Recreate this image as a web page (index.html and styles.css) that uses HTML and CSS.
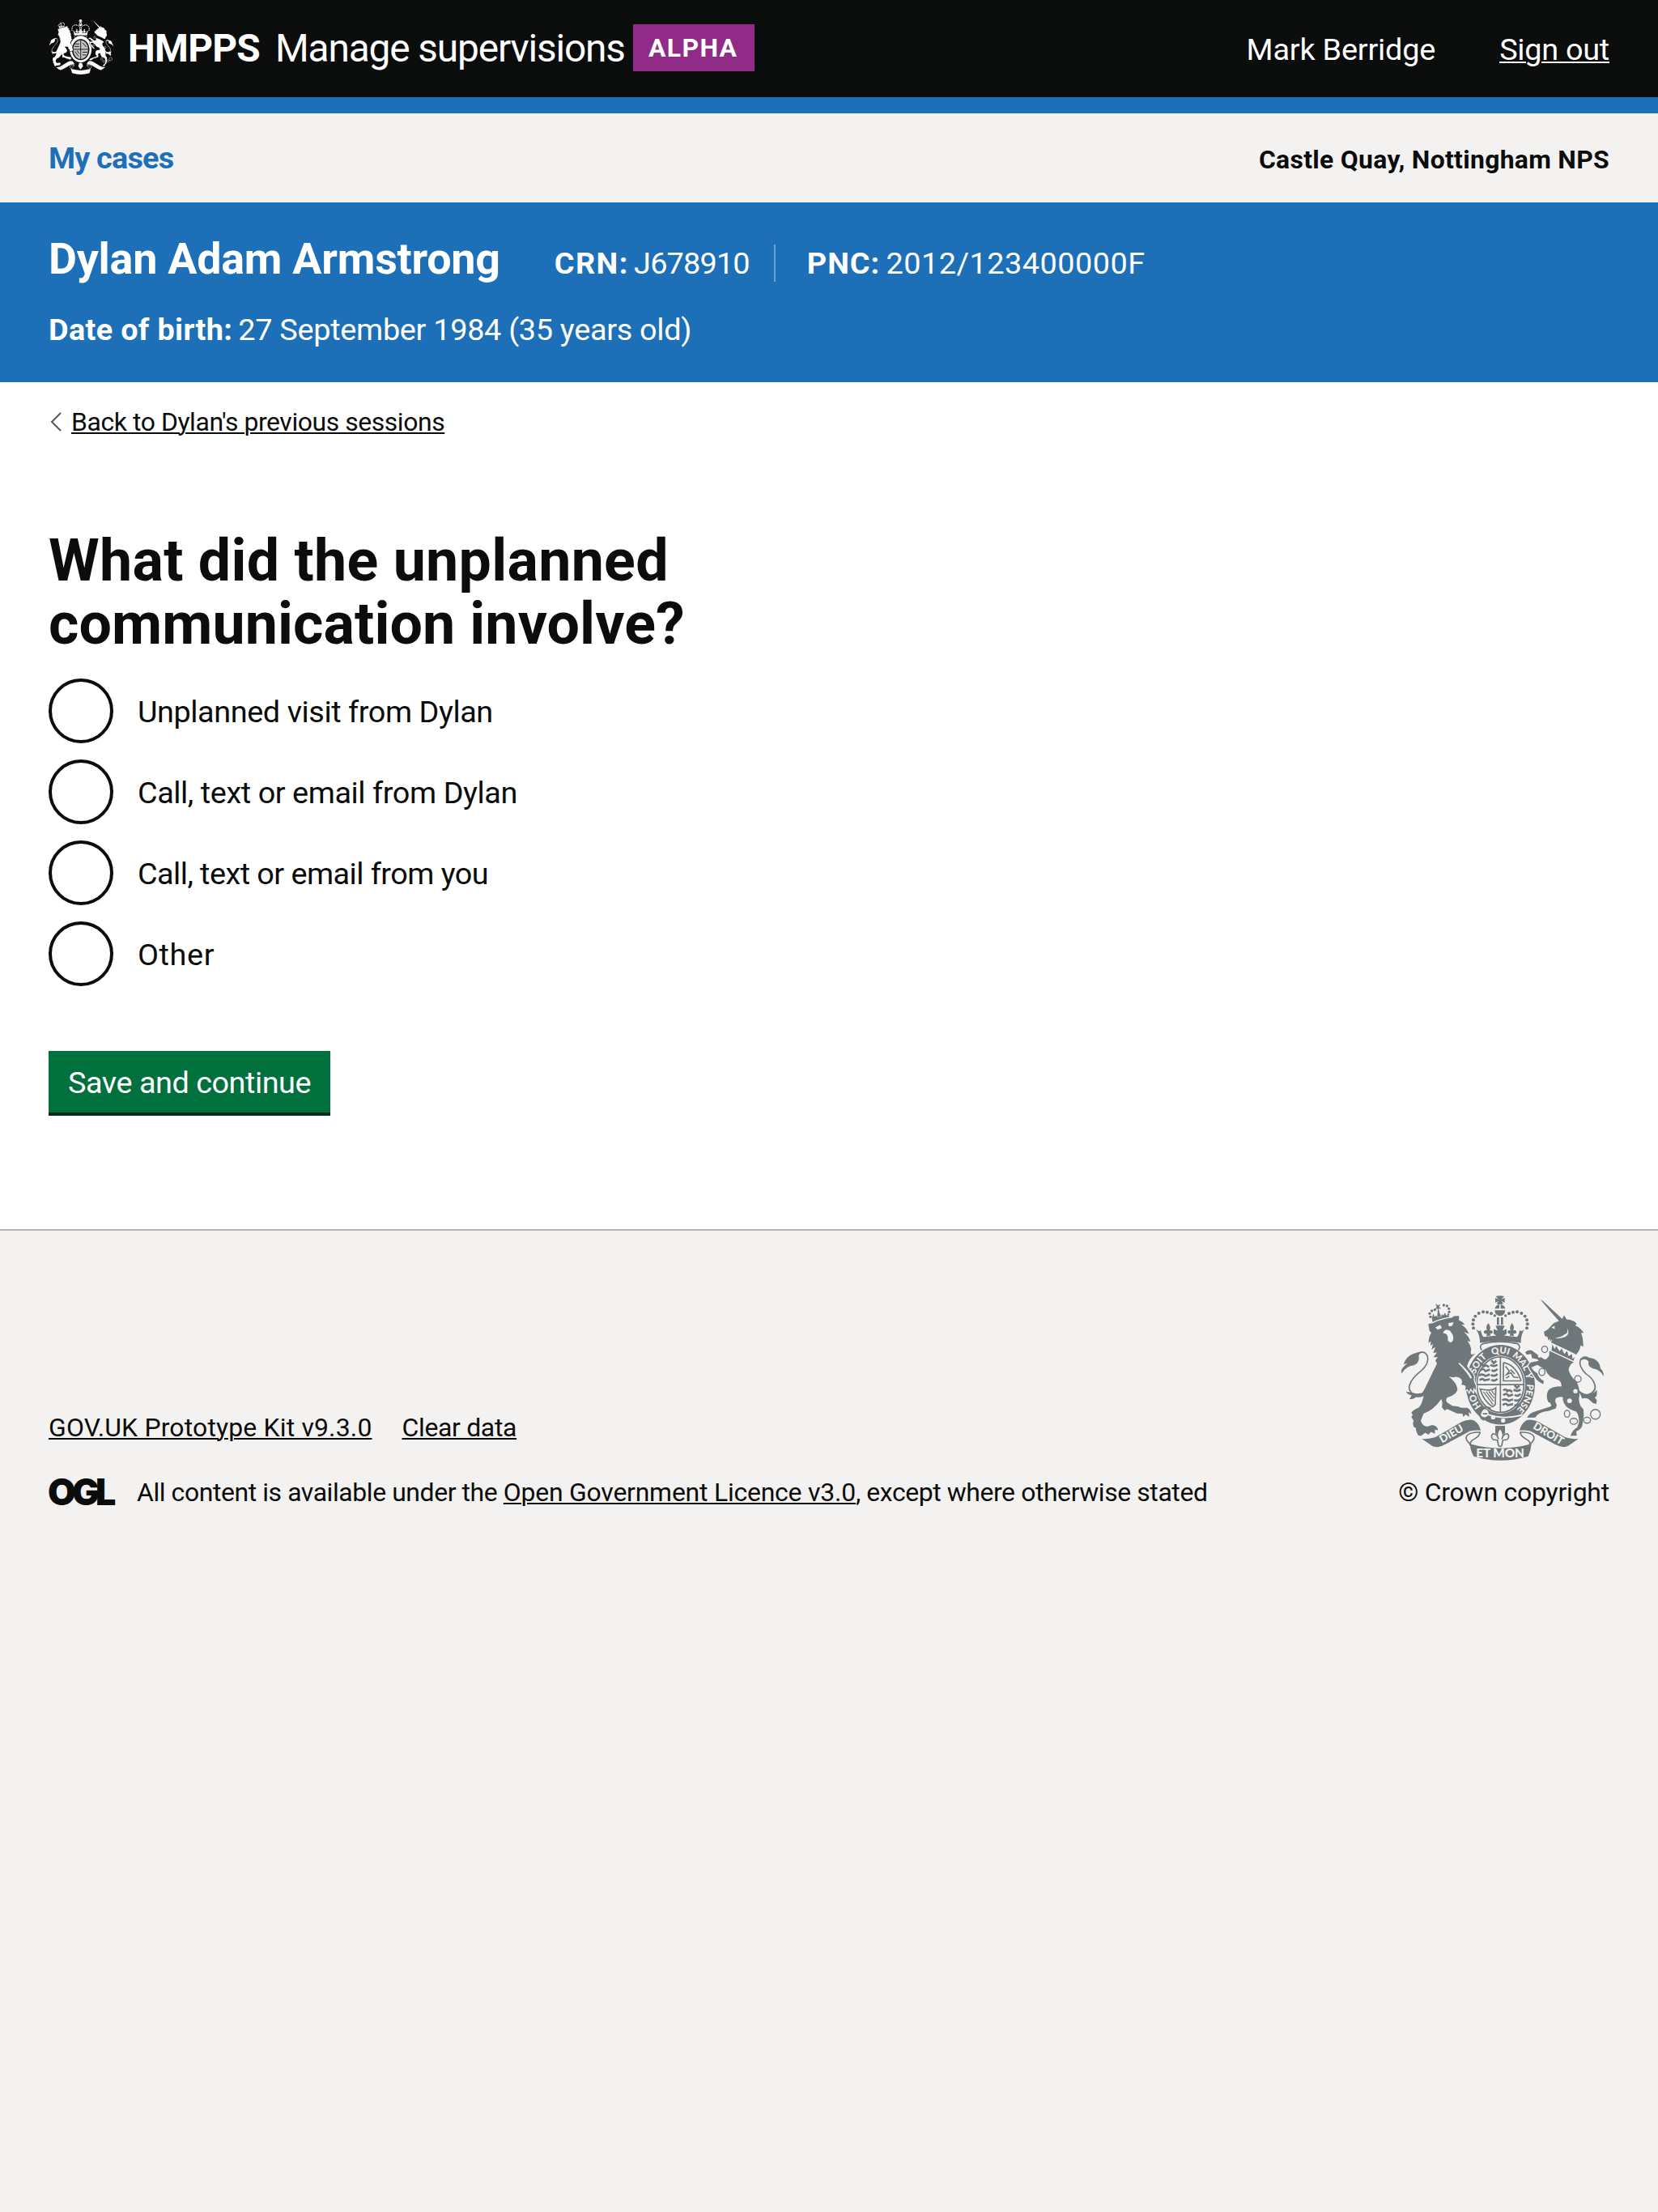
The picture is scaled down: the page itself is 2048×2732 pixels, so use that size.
FILE: index.html
```
<!DOCTYPE html>
<html lang="en">
<head>
<meta charset="utf-8">
<title>What did the unplanned communication involve? - Manage supervisions</title>
<link rel="stylesheet" href="styles.css">
</head>
<body>
<svg class="defs" width="0" height="0" aria-hidden="true">
  <defs>
    <g id="dots">
      <circle cx="363" cy="420" r="6"/><circle cx="361" cy="405" r="6"/><circle cx="363" cy="390" r="6"/><circle cx="370" cy="376" r="6"/><circle cx="383" cy="365" r="6"/><circle cx="399" cy="360" r="6"/><circle cx="414" cy="361" r="6"/><circle cx="429" cy="366" r="6"/><circle cx="442" cy="374" r="5"/>
    </g>
    <g id="fleur">
      <path d="M418 401 Q406 418 414 428 Q404 426 401 434 Q403 444 413 440 L411 450 L427 448 L424 440 Q434 443 435 433 Q431 426 423 429 Q430 418 418 401Z"/>
    </g>
    <g id="beasts">
      <!-- lion -->
      <g><circle cx="204" cy="378" r="5"/><circle cx="201" cy="366" r="5"/><circle cx="209" cy="356" r="5"/><circle cx="220" cy="352" r="5"/><circle cx="253" cy="335" r="5"/><circle cx="265" cy="338" r="5"/><circle cx="272" cy="348" r="5"/><circle cx="273" cy="360" r="5"/><circle cx="270" cy="370" r="4"/></g>
      <path d="M222 330 L232 336 L240 331 L236 342 L244 348 L234 348 L237 362 L243 376 L229 380 L231 348 L221 350 L227 341Z"/>
      <path d="M209 384 L214 366 L219 378 L226 374 L230 380 L244 377 L246 368 L252 373 L257 363 L262 372 L270 374 L274 380 Q240 384 212 398Z"/>
      <path class="edge" d="M212 402 Q245 386 283 382 L291 376 L310 375 L309 391 Q322 396 331 407 L318 407 Q338 418 346 441 L328 435 Q346 450 352 470 L341 468 Q352 482 355 498 Q352 508 354 517 Q362 519 371 514 Q346 535 339 562 L352 579 Q362 588 366 602 Q360 612 372 634 L371 652 L364 640 L362 656 L352 644 L347 657 L340 646 L332 652 Q336 640 333 634 L318 629 Q324 620 318 610 Q306 596 288 603 L272 600 Q300 622 304 645 Q304 665 270 676 Q258 680 264 695 L286 709 Q304 708 318 716 L340 716 Q354 722 355 740 L346 731 L347 750 L334 741 L326 750 L322 738 L302 737 L276 725 Q260 716 258 728 L246 714 Q250 696 244 684 Q215 725 178 738 L168 764 Q174 784 192 786 L210 780 Q230 782 232 800 L221 796 L220 812 L206 805 L196 816 L185 808 L168 820 L158 818 Q148 800 150 790 L142 787 Q136 770 142 765 L133 750 L138 742 L133 734 Q142 722 160 716 Q170 706 174 690 L180 668 L173 662 Q186 640 195 620 Q216 575 228 552 L222 540 L231 528 L215 528 L228 510 L214 512 L222 490 L208 500 L213 478 L204 486 L205 468 L197 476 Q196 455 207 438 L200 430 L196 404Z"/>
      <path class="line" d="M184 660 Q165 672 142 667 Q118 650 127 630 Q135 605 170 578 Q200 550 193 525 Q184 502 158 514"/>
      <path d="M192 508 Q168 504 160 522 Q166 548 142 558 Q112 562 97 588 Q93 575 103 565 L118 550 L104 555 Q114 524 140 515 Q160 508 180 506Z"/>
      <path d="M184 656 Q160 668 140 660 L113 656 Q120 668 134 670 L126 684 Q142 684 150 676 Q165 680 182 671Z"/>
      <!-- unicorn -->
      <path d="M612 315 Q618 316 622 321 L692 386 L699 372 L708 388 Q735 390 746 404 L740 410 Q762 420 772 438 L762 438 Q770 456 770 490 L760 484 Q758 504 744 518 L708 500 L650 474 L656 462 L646 470 L649 458 L641 466 L637 452 L628 450 L624 434 L640 424 L660 402 L680 394 Q640 350 612 315Z"/>
      <path class="edge" d="M644 504 L690 522 L736 546 Q716 556 716 576 Q722 600 746 620 Q758 646 756 670 Q750 690 762 712 L771 722 Q774 745 768 770 L766 785 Q756 800 744 803 L746 819 L723 820 Q728 800 748 788 L754 770 Q756 745 744 730 Q700 720 694 684 Q700 670 672 678 Q660 686 672 706 L668 718 L640 728 Q616 730 600 742 L592 752 L562 753 Q568 736 590 730 L650 711 Q655 700 640 694 Q630 672 640 652 Q650 636 690 636 Q688 615 676 612 Q640 604 630 575 L600 557 L578 566 Q584 580 600 588 Q604 606 624 616 L622 628 Q600 618 592 604 L582 588 Q570 572 566 560 L575 548 L605 542 L600 536 L580 532 L577 516 L560 518 L555 510 Q565 498 580 503 L596 515 L616 530 Q628 540 634 534 Q648 524 644 504Z"/>
      <path class="line" d="M748 650 Q768 672 790 668 Q822 652 812 628 Q805 605 780 590 Q752 560 759 540 Q768 522 788 530"/>
      <path d="M758 534 Q780 524 810 534 Q832 545 834 570 Q846 580 846 599 Q832 574 806 570 Q784 562 790 545 Q780 530 762 540Z"/>
      <path d="M752 648 Q776 672 794 662 Q814 662 820 648 Q824 672 812 680 Q824 682 818 702 Q804 700 796 690 Q784 676 766 682Z"/>
      <g class="ring"><ellipse cx="627" cy="499" rx="11" ry="12"/><ellipse cx="617" cy="583" rx="11" ry="13"/><ellipse cx="750" cy="609" rx="12" ry="12"/><ellipse cx="710" cy="738" rx="10" ry="13"/><ellipse cx="735" cy="766" rx="14" ry="11"/><ellipse cx="784" cy="762" rx="13" ry="11"/><circle cx="815" cy="740" r="18"/></g>
      <!-- crown -->
      <path d="M446 302 Q461 298 477 302 L467 313 L479 308 L479 326 L467 319 L474 330 Q461 334 449 330 L456 319 L444 326 L444 308 L456 313Z"/>
      <path d="M442 348 Q446 334 459 332 L459 348Z M464 332 Q478 335 481 348 L464 348Z M442 354 L481 354 Q480 374 461 375 Q443 374 442 354Z"/>
      <path d="M450 380 L458 380 L458 408 L450 408Z M465 380 L473 380 L473 408 L465 408Z"/>
      <use href="#dots"/><use href="#dots" transform="matrix(-1 0 0 1 924 0)"/>
      <use href="#fleur"/><use href="#fleur" transform="matrix(-1 0 0 1 924 0)"/>
      <path d="M372 424 Q384 436 390 428 Q394 446 400 453 L448 448 L438 442 L438 424 L453 430 L445 412 Q462 408 479 412 L471 430 L486 424 L486 442 L476 448 L524 453 Q532 446 534 428 Q542 436 552 424 Q538 446 539 475 Q462 464 387 475 Q388 446 372 424Z"/>
      <path class="line" d="M398 478 Q462 464 526 478 Q540 486 530 502 M398 478 Q382 486 394 502"/>
    </g>
    <g id="scroll">
      <path d="M172 831 Q200 833 222 825 L320 768 Q346 756 366 763 Q384 775 390 800 Q372 798 350 802 L258 852 Q232 866 212 859Z"/>
      <path class="line" d="M388 806 Q338 806 336 828 Q338 842 354 852 M388 806 Q386 822 366 832 Q350 840 350 856"/>
    </g>
    <g id="pards">
      <path class="fine" d="M388 560 Q396 550 402 562 Q412 554 420 566 M388 578 Q398 566 408 580 L424 574 M384 596 Q396 588 408 598 L424 592 M386 614 Q396 604 404 614 L424 610 M430 540 L438 550 L448 542 M426 556 Q438 566 452 556 M430 576 Q440 584 452 572 M428 594 Q442 602 452 590 M430 612 Q440 620 452 608"/>
    </g>
    <symbol id="arms" viewBox="96 299 750 613" preserveAspectRatio="none">
      <!-- garter and shield -->
      <ellipse cx="463" cy="630" rx="128" ry="148"/>
      <g class="paper">
        <ellipse cx="463" cy="630" rx="92" ry="108"/>
        <path d="M398 732 Q470 762 548 738 L540 747 Q470 764 412 742Z"/>
        <circle cx="436" cy="751" r="8"/><circle cx="473" cy="763" r="8"/><circle cx="404" cy="736" r="15"/>
      </g>
      <path class="line" d="M428 718 Q404 704 392 730 Q380 752 402 762 M398 738 L414 738"/>
      <path d="M486 744 L506 724 Q524 728 522 740Z"/>
      <ellipse class="line" cx="463" cy="630" rx="87" ry="103"/>
      <path class="line" d="M463 527 L463 733 M376 630 L550 630"/>
      <use href="#pards"/><use href="#pards" transform="translate(86 92)"/>
      <g class="line">
        <path d="M474 548 L474 616 L540 616 M474 548 Q520 556 540 616"/>
        <path d="M482 562 L496 580 L486 592 L502 586 L512 602 L530 604 M500 574 L516 590 M484 606 L496 598"/>
        <path d="M388 646 Q430 656 446 642 L444 704 L434 712 Q400 690 388 646Z"/>
      </g>
      <path class="harp" d="M400 656 L436 704 M410 656 L438 692 M420 655 L440 680 M430 652 L442 668"/>
      <g class="motto">
        <path id="garter" fill="none" d="M463 746 A98 116 0 0 1 463 514 A98 116 0 0 1 463 746"/>
        <text><textPath href="#garter" startOffset="16%">HO</textPath></text>
        <text><textPath href="#garter" startOffset="36.5%">SOIT</textPath></text>
        <text><textPath href="#garter" startOffset="50%">QUI</textPath></text>
        <text><textPath href="#garter" startOffset="62%">MAL</textPath></text>
        <text><textPath href="#garter" startOffset="70.5%">Y</textPath></text>
        <text><textPath href="#garter" startOffset="82.5%">PENSE</textPath></text>
      </g>
      <use href="#beasts"/>
      <g class="paper">
        <path d="M222 418 L240 408 L246 420 L230 426Z M270 402 L290 398 L284 412 L272 414Z"/>
        <path d="M250 438 Q256 426 264 426 L276 430 L286 444 Q292 462 283 472 Q272 476 268 464 Q270 450 262 442Z"/>
        <path d="M700 444 Q716 440 710 420 Q722 442 704 452 Q680 462 664 456 Q686 456 700 444Z M652 418 L664 412 L664 424Z"/>
        <path d="M652 474 L748 522 L736 548 L646 505Z"/>
        <circle cx="741" cy="654" r="8"/><circle cx="719" cy="690" r="9"/><circle cx="608" cy="524" r="6"/>
        <path d="M310 548 Q346 580 358 604 L352 608 Q340 584 308 552Z"/>
      </g>
      <path d="M656 480 L664 498 L670 486 L682 506 L690 496 L700 516 L710 505 L716 524 L728 516 L730 534 L738 528 L734 542 L652 503Z"/>
      <use href="#scroll"/><use href="#scroll" transform="matrix(-1 0 0 1 924 0)"/>
      <path d="M350 850 Q462 882 578 850 Q576 876 566 896 Q462 926 364 896 Q352 876 350 850Z"/>
      <path d="M444 783 L480 783 L480 812 L444 812Z"/>
      <path class="line lily" d="M462 792 Q444 812 456 832 Q450 812 436 812 Q424 820 436 834 L452 836 L456 856 Q462 864 468 856 L472 836 L488 834 Q500 820 488 812 Q474 812 468 832 Q480 812 462 792Z"/>
      <g class="motto">
        <text class="side" transform="translate(288 824) rotate(-30)">DIEU</text>
        <text class="side" transform="translate(634 823) rotate(31)">DROIT</text>
        <text class="wide" transform="translate(462 901)">ET MON</text>
      </g>
    </symbol>
    <symbol id="arms-small" viewBox="96 299 750 613" preserveAspectRatio="none">
      <ellipse cx="463" cy="630" rx="128" ry="148"/>
      <ellipse class="paper" cx="463" cy="635" rx="102" ry="118"/>
      <ellipse cx="463" cy="635" rx="88" ry="104" opacity="0.75"/>
      <path class="gap" d="M463 530 L463 740 M374 632 L552 632 M396 572 L446 572 M390 600 L446 600 M486 560 L530 606 M484 664 L540 664 M484 694 L524 694 M394 656 L440 710 M420 646 L446 680"/>
      <use href="#beasts"/>
      <use href="#scroll"/><use href="#scroll" transform="matrix(-1 0 0 1 924 0)"/>
      <path d="M350 850 Q462 882 578 850 Q576 876 566 896 Q462 926 364 896 Q352 876 350 850Z"/>
      <path d="M446 783 L478 783 L490 820 L462 856 L434 820Z"/>
    </symbol>
  </defs>
</svg>

<header class="masthead">
  <div class="brand">
    <svg class="brand-crest"><use href="#arms-small"/></svg>
    <span class="brand-org">HMPPS</span>
    <span class="brand-service">Manage supervisions</span>
    <strong class="tag">ALPHA</strong>
  </div>
  <div class="account">
    <span class="account-name">Mark Berridge</span>
    <a class="account-link" href="#">Sign out</a>
  </div>
</header>

<nav class="primary-nav">
  <a class="nav-link" href="#">My cases</a>
  <span class="nav-office">Castle Quay, Nottingham NPS</span>
</nav>

<section class="case-banner">
  <div class="case-row">
    <span class="case-name">Dylan Adam Armstrong</span>
    <span class="case-item case-crn"><b>CRN:</b> <span class="crn-value">J678910</span></span>
    <span class="case-item case-pnc"><b>PNC:</b> <span class="pnc-value">2012/123400000F</span></span>
  </div>
  <div class="case-dob"><b>Date of birth:</b> 27 September 1984 (35 years old)</div>
</section>

<main class="content">
  <a class="back-link" href="#"><svg class="chevron" viewBox="0 0 14 24"><path d="M13 1 L2 12 L13 23"/></svg><span>Back to Dylan's previous sessions</span></a>
  <h1 class="question"><span class="question-start">What did the unplanned</span><br>communication involve?</h1>
  <div class="radios">
    <label class="radio"><input class="radio-input" type="radio" name="type"><span class="radio-text">Unplanned visit from Dylan</span></label>
    <label class="radio"><input class="radio-input" type="radio" name="type"><span class="radio-text">Call, text or email from Dylan</span></label>
    <label class="radio radio-you"><input class="radio-input" type="radio" name="type"><span class="radio-text">Call, text or email from you</span></label>
    <label class="radio radio-other"><input class="radio-input" type="radio" name="type"><span class="radio-text">Other</span></label>
  </div>
  <button class="button" type="button">Save and continue</button>
</main>

<footer class="footer">
  <div class="footer-main">
    <div class="footer-links">
      <a class="kit-link" href="#">GOV.UK Prototype Kit v9.3.0</a>
      <a class="clear-link" href="#">Clear data</a>
    </div>
    <div class="licence">
      <span class="ogl">OGL</span>
      <span class="licence-text">All content is available under the <a class="licence-link" href="#">Open Government Licence v3.0</a>, except where otherwise stated</span>
    </div>
  </div>
  <div class="copyright">
    <svg class="crest"><use href="#arms"/></svg>
    <span>© Crown copyright</span>
  </div>
</footer>
</body>
</html>
```
FILE: styles.css
```
* { box-sizing: border-box; }
body {
  margin: 0;
  background: #f3f2f1;
  color: #0b0c0c;
  font-family: Roboto, "Open Sans", sans-serif;
  font-size: 37.8px;
  line-height: 60px;
}
a { color: inherit; text-decoration-thickness: 2px; text-underline-offset: 2px; }
.defs { position: absolute; }

/* Royal arms */
.line { fill: none; stroke: currentColor; stroke-width: 5; }
.ring { fill: none; stroke: currentColor; stroke-width: 4; }
.fine { fill: none; stroke: currentColor; stroke-width: 8; }
.harp { fill: none; stroke: currentColor; stroke-width: 4; }
.gap { fill: none; stroke: var(--paper); stroke-width: 8; }
.edge { stroke: var(--paper); stroke-width: 8; paint-order: stroke; }
.lily { fill: var(--paper); }
.paper { fill: var(--paper); }
.motto { fill: var(--paper); font: 900 34px Lato, sans-serif; text-anchor: middle; }
.side { font-size: 40px; }
.wide { font-size: 46px; }

.masthead {
  --paper: #0b0c0c;
  height: 140px;
  padding: 0 60px;
  display: flex;
  justify-content: space-between;
  background: #0b0c0c;
  color: #fff;
  border-bottom: 20px solid #1d70b8;
}
.brand { display: flex; font-size: 47.8px; padding-top: 30px; white-space: nowrap; }
.brand-crest { width: 79px; height: 68px; fill: currentColor; margin: -6px 18px 0 1px; }
.brand-org { font-weight: 700; letter-spacing: -0.73px; margin-right: 19px; }
.brand-service { letter-spacing: -1.13px; }
.tag {
  width: 150px;
  height: 58px;
  margin-left: 10px;
  padding-left: 19px;
  background: #912b88;
  font-size: 31.9px;
  line-height: 58px;
  letter-spacing: 1.42px;
}
.account { display: flex; gap: 79px; padding-top: 31px; }
.account-name { letter-spacing: -0.18px; }
.account-link { letter-spacing: -0.25px; }

.primary-nav {
  height: 110px;
  padding: 0 60px;
  display: flex;
  justify-content: space-between;
  line-height: 110px;
  font-weight: 700;
}
.nav-link { color: #1d70b8; text-decoration: none; letter-spacing: -0.8px; }
.nav-office { font-size: 31.9px; letter-spacing: 0.31px; padding-top: 2px; }

.case-banner { height: 222px; padding: 40px 60px 0; background: #1d70b8; color: #fff; }
.case-row { display: flex; align-items: baseline; }
.case-name { font-size: 53.8px; font-weight: 700; letter-spacing: -0.22px; }
.case-item { line-height: 46px; }
.case-crn { margin-left: 67px; padding-right: 30px; border-right: 2px solid #6ba1d1; }
.case-crn b { letter-spacing: 1.4px; margin-right: -3px; }
.crn-value { letter-spacing: -0.8px; }
.case-pnc { margin-left: 39px; }
.case-pnc b { letter-spacing: 0.98px; margin-right: -2px; }
.pnc-value { letter-spacing: 0.5px; }
.case-dob { margin-top: 27px; letter-spacing: -0.28px; }
.case-dob b { letter-spacing: 0.35px; margin-right: -2px; }

.content {
  height: 1046px;
  padding: 29px 60px 0;
  display: flex;
  flex-direction: column;
  align-items: flex-start;
  background: #fff;
}
.back-link {
  display: flex;
  align-items: center;
  font-size: 31.9px;
  line-height: 40px;
  letter-spacing: -0.41px;
  text-decoration: none;
}
.back-link span { text-decoration: underline 2px; text-underline-offset: 2px; }
.chevron { width: 14px; height: 24px; margin: 0 12px 0 2px; fill: none; stroke: #505a5f; stroke-width: 2; }
.question { margin: 113px 0 28px; font-size: 71.7px; line-height: 78px; letter-spacing: 0.11px; }
.question-start { letter-spacing: 0.3px; }
.radios { display: grid; gap: 20px; letter-spacing: -0.42px; }
.radio { display: flex; align-items: center; gap: 30px; height: 80px; }
.radio-text { padding-top: 2px; }
.radio-you { letter-spacing: -0.54px; }
.radio-other { letter-spacing: 0.6px; }
.radio-input {
  appearance: none;
  width: 80px;
  height: 80px;
  margin: 0;
  border: 4px solid #0b0c0c;
  border-radius: 50%;
}
.button {
  width: 348px;
  height: 76px;
  margin: 80px 0 0;
  padding: 1px 0 0;
  border: 0;
  background: #00703c;
  box-shadow: 0 4px 0 #002d18;
  color: #fff;
  font: inherit;
  line-height: 76px;
  letter-spacing: -0.46px;
}

.footer {
  --paper: #f3f2f1;
  display: flex;
  justify-content: space-between;
  align-items: flex-end;
  padding: 80px 60px 0;
  border-top: 2px solid #b1b4b6;
  font-size: 31.9px;
  line-height: 40px;
}
.footer-main { display: grid; gap: 40px; }
.footer-links { display: flex; gap: 37px; }
.kit-link { letter-spacing: 0.18px; }
.clear-link { letter-spacing: -0.3px; }
.licence { display: flex; letter-spacing: -0.4px; }
.ogl { width: 82px; margin: 0 28px 0 -1px; font: 900 44.8px/40px Inter, sans-serif; letter-spacing: -4.8px; }
.licence-link { letter-spacing: -0.2px; }
.copyright { display: flex; flex-direction: column; align-items: center; gap: 19px; letter-spacing: -0.19px; }
.crest { width: 250px; height: 204px; margin-right: 3px; fill: currentColor; color: #6f777b; }
```
